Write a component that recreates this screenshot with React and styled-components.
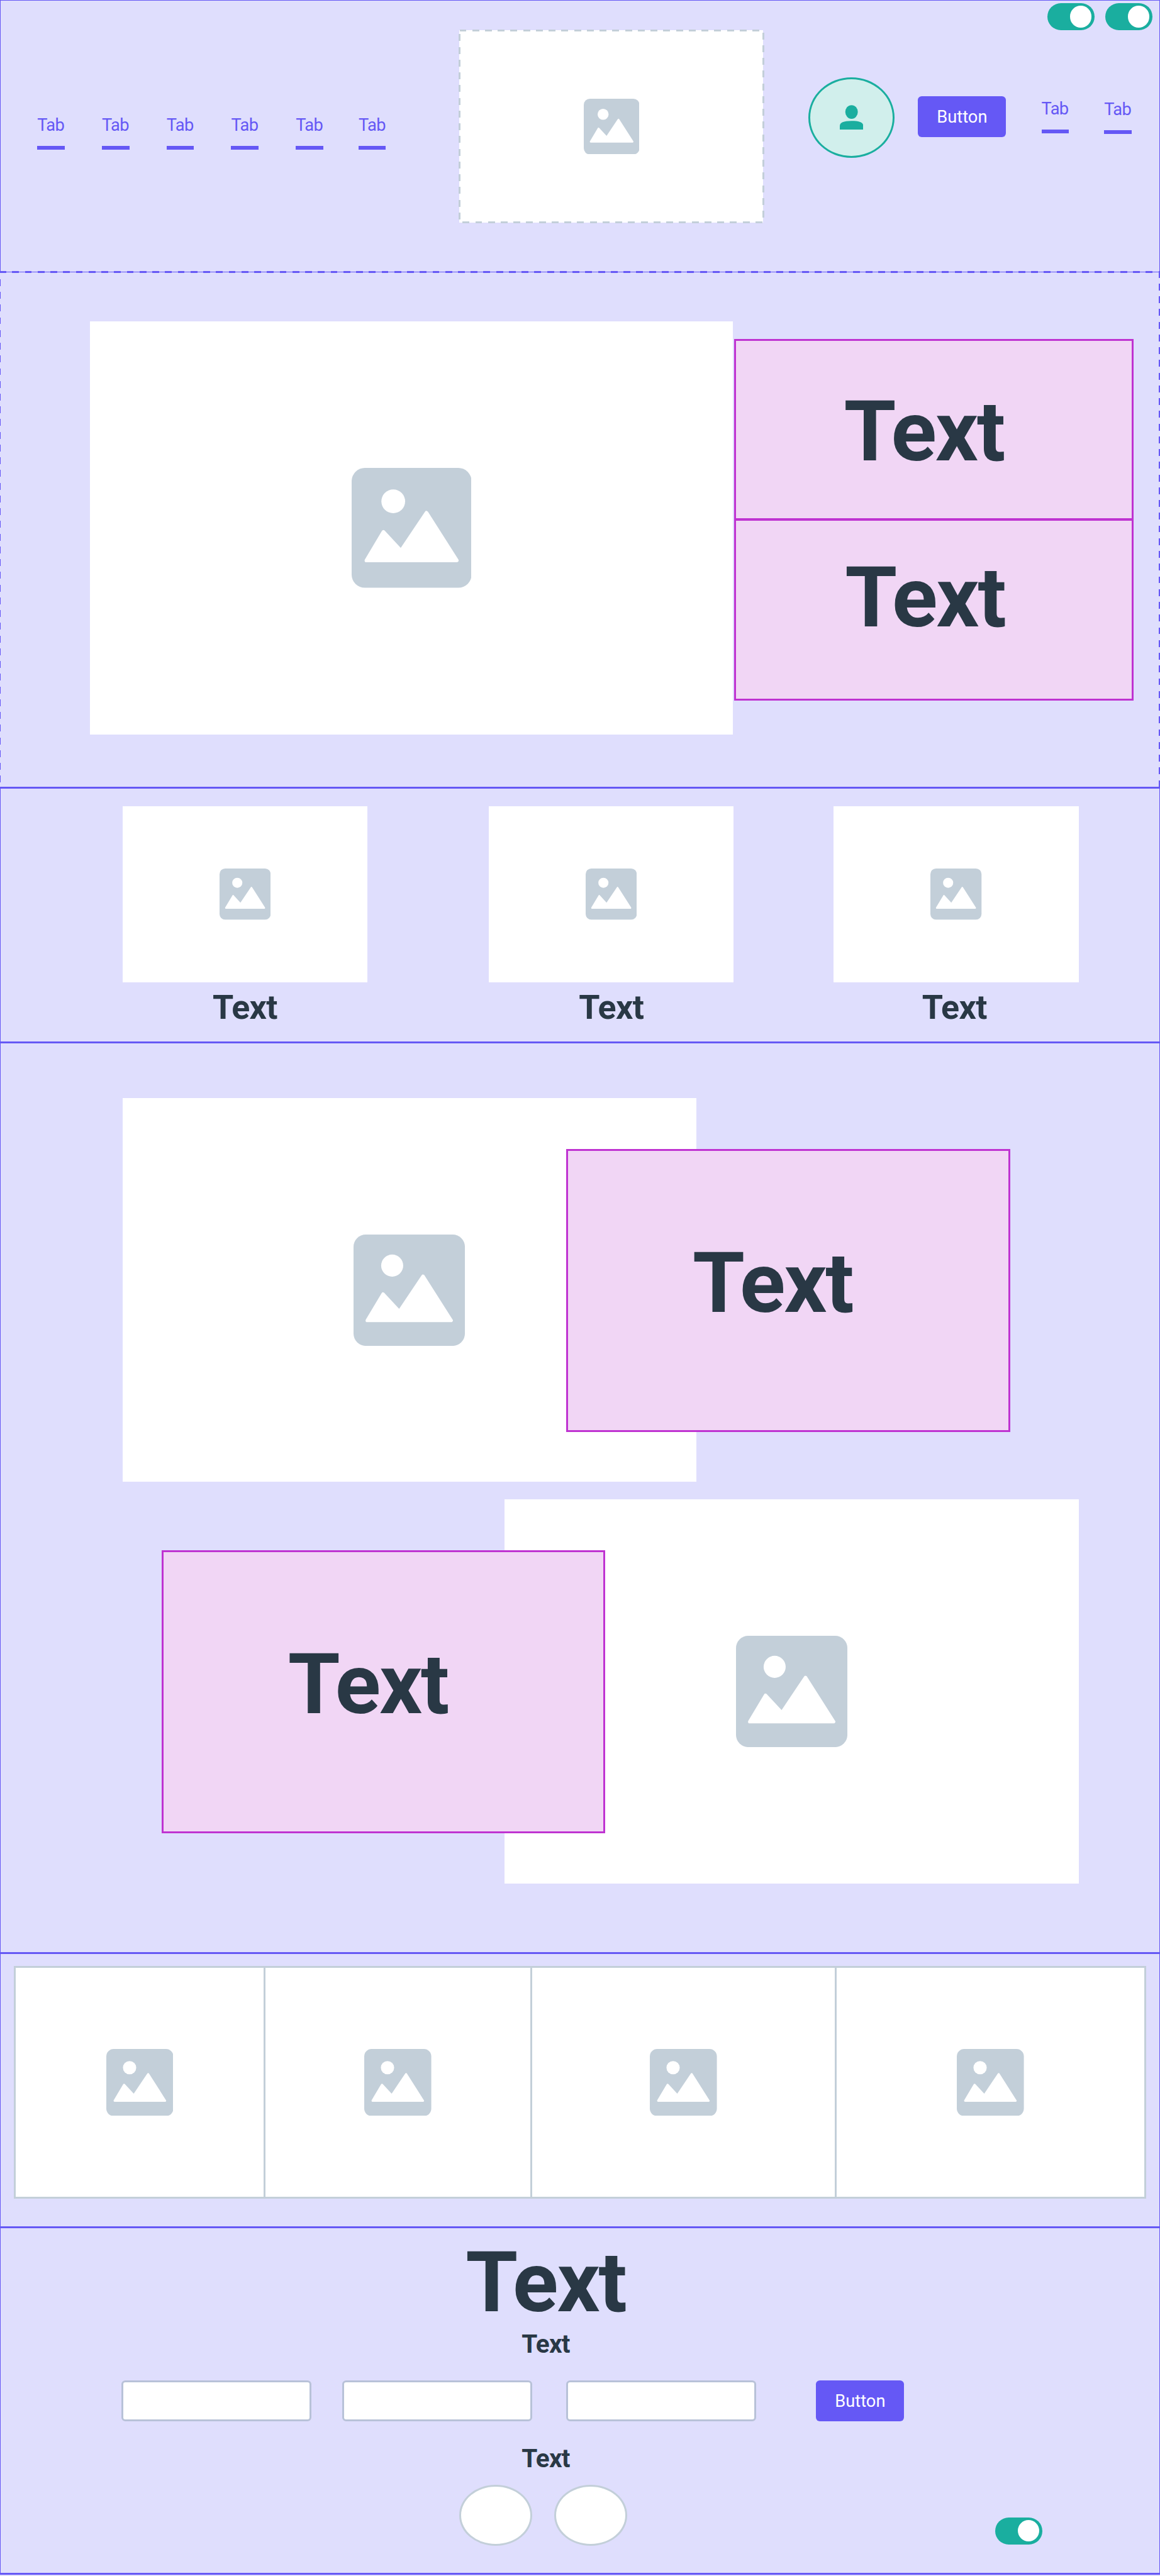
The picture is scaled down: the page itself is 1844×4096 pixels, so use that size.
import React from 'react';
import styled, { createGlobalStyle, css } from 'styled-components';

/* All measures are written in design units and scaled to the page width. */
const SCALE = 1844 / 2368;
const u = (n) => `${+(n * SCALE).toFixed(3)}px`;

const color = {
  violet: '#6558f5',
  lilac: '#dfdefd',
  orchid: '#bf33d1',
  pink: '#f1d6f5',
  teal: '#1aae9f',
  mint: '#d1efec',
  grey: '#c3cfd9',
  inputLine: '#b8c2d8',
  ink: '#293845',
};

const GlobalStyle = createGlobalStyle`
  * { box-sizing: border-box; }
  body {
    margin: 0;
    background: ${color.lilac};
    font-family: Roboto, 'Liberation Sans', sans-serif;
  }
`;

/* Dashes run clockwise from the top-left corner and carry on round each corner. */
const DASH = 14;
const PERIOD = 26;
const dashSide = (angle, line, travelled) => {
  const s = 2 - (travelled % PERIOD);
  return `repeating-linear-gradient(${angle}deg, ${line} ${u(s)}, ${line} ${u(s + DASH)}, transparent ${u(s + DASH)}, transparent ${u(s + PERIOD)})`;
};
const dashedOutline = (w, h, line) => css`
  &::after {
    content: '';
    position: absolute;
    inset: ${u(-2)};
    pointer-events: none;
    background:
      ${dashSide(90, line, 0)} top / 100% ${u(4)} no-repeat,
      ${dashSide(180, line, w)} right / ${u(4)} 100% no-repeat,
      ${dashSide(270, line, w + h)} bottom / 100% ${u(4)} no-repeat,
      ${dashSide(0, line, 2 * w + h)} left / ${u(4)} 100% no-repeat;
  }
`;
const solidOutline = (line) => css`
  &::after {
    content: '';
    position: absolute;
    inset: ${u(-2)};
    pointer-events: none;
    border: ${u(4)} solid ${line};
  }
`;

const Page = styled.main`
  width: 1844px;
  height: 4096px;
  overflow: hidden;
  background: ${color.lilac};
`;

const Section = styled.section`
  position: relative;
  height: ${(p) => u(p.$h)};
  background: ${color.lilac};
  ${(p) => (p.$dashed ? dashedOutline(2368, p.$h, color.violet) : solidOutline(color.violet))}
`;

/* ---------- shared parts ---------- */

const Frame = styled.div`
  position: relative;
  flex: none;
  display: flex;
  align-items: center;
  justify-content: center;
  width: ${(p) => u(p.$w)};
  height: ${(p) => u(p.$h)};
  background: #fff;
  ${(p) => p.$outline === 'dashed' && dashedOutline(p.$w, p.$h, color.grey)}
  ${(p) => p.$outline === 'solid' && solidOutline(color.grey)}

  svg {
    display: block;
    width: auto;
    height: 29%;
  }
`;

function Picture({ w, h, outline, className }) {
  return (
    <Frame $w={w} $h={h} $outline={outline} className={className}>
      <svg viewBox="0 0 100 100" aria-hidden="true">
        <rect width="100" height="100" rx="11" fill={color.grey} />
        <circle cx="34.7" cy="27.9" r="9.9" fill="#fff" />
        <path
          d="M12.3 77.2 L26.5 53.4 L41.1 69.15 L62.4 37.4 L87.7 77.2 Z"
          fill="#fff"
          stroke="#fff"
          strokeWidth="3"
          strokeLinejoin="round"
        />
      </svg>
    </Frame>
  );
}

const textSizes = {
  large: { size: 172, spacing: -2.6 },
  medium: { size: 69, spacing: -0.8 },
  small: { size: 52, spacing: -1 },
};

const Heading = styled.div`
  color: ${color.ink};
  font-weight: 700;
  font-size: ${(p) => u(textSizes[p.$size].size)};
  letter-spacing: ${(p) => u(textSizes[p.$size].spacing)};
  line-height: 1;
  white-space: nowrap;
`;

const Button = styled.button`
  flex: none;
  width: ${u(180)};
  height: ${u(84)};
  padding: ${u(4)} 0 0;
  border: 0;
  border-radius: ${u(8)};
  background: ${color.violet};
  color: #fff;
  font: 400 ${u(35)} / 1 Roboto, 'Liberation Sans', sans-serif;
  letter-spacing: ${u(0)};
`;

const Toggle = styled.span`
  flex: none;
  display: flex;
  justify-content: flex-end;
  align-items: center;
  width: ${u(96)};
  height: ${u(56)};
  padding-right: ${u(6)};
  border-radius: ${u(28)};
  background: ${color.teal};

  &::before {
    content: '';
    width: ${u(44)};
    height: ${u(44)};
    border-radius: 50%;
    background: #fff;
  }
`;

const Card = styled.div`
  flex: none;
  width: ${(p) => u(p.$w)};
  height: ${(p) => u(p.$h)};
  border: ${u(4)} solid ${color.orchid};
  background: ${color.pink};
`;

/* ---------- header ---------- */

const Toggles = styled.div`
  display: flex;
  justify-content: flex-end;
  gap: ${u(22)};
  height: ${u(62)};
  padding: ${u(6)} ${u(16)} 0 0;
`;

const HeaderRow = styled.div`
  display: flex;
  align-items: flex-start;
`;

const TabList = styled.nav`
  flex: none;
  display: flex;
  width: ${u(938)};
  padding: ${u(176)} 0 0 ${u(76)};
  gap: ${u(76)};
`;

const Tab = styled.a`
  flex: none;
  width: ${u(56)};
  margin-left: ${(p) => u(p.$shift || 0)};
  border-bottom: ${u(8)} solid ${color.violet};
  padding-top: ${u(1)};
  padding-bottom: ${u(24)};
  color: ${color.violet};
  font-size: ${u(35)};
  letter-spacing: ${u(-0.8)};
  line-height: 1;
  white-space: nowrap;
`;

const Avatar = styled.div`
  flex: none;
  display: flex;
  justify-content: center;
  width: ${u(176)};
  height: ${u(164)};
  margin: ${u(96)} 0 0 ${u(92)};
  padding-top: ${u(52)};
  border: ${u(4)} solid ${color.teal};
  border-radius: 50%;
  background: ${color.mint};

  svg {
    width: ${u(48)};
    height: ${u(51)};
  }
`;

const HeaderButton = styled(Button)`
  margin: ${u(134)} 0 0 ${u(48)};
`;

const SideTabs = styled.nav`
  display: flex;
  align-items: flex-start;
  padding: ${u(142)} 0 0 ${u(72)};
  gap: ${u(72)};

  a:last-child {
    margin-top: ${u(2)};
  }
`;

/* ---------- hero ---------- */

const HeroRow = styled.div`
  display: flex;
  align-items: flex-start;
  gap: ${u(2)};
  padding: ${u(100)} 0 0 ${u(184)};
`;

const HeroCards = styled.div`
  padding-top: ${u(36)};
`;

const HeroCard = styled(Card)`
  margin-bottom: ${u(-2)};
  padding: ${(p) => `${u(p.$top)} 0 0 ${u(p.$left)}`};
`;

/* ---------- gallery ---------- */

const Gallery = styled.div`
  display: flex;
  padding: ${u(38)} 0 0 ${u(250)};
`;

const GalleryItem = styled.figure`
  margin: 0 ${(p) => u(p.$after)} 0 0;
`;

const Caption = styled(Heading)`
  width: 100%;
  margin-top: ${u(16)};
  padding-right: ${(p) => u(p.$nudge)};
  text-align: center;
`;

/* ---------- features ---------- */

const Features = styled.div`
  display: flex;
  flex-direction: column;
  gap: ${u(36)};
  padding-top: ${u(114)};
`;

const Feature = styled.div`
  display: flex;
  align-items: flex-start;
  padding-left: ${(p) => u(p.$left)};
`;

const FeatureCard = styled(Card)`
  position: relative;
  z-index: 1;
  margin-top: ${u(104)};
  margin-left: ${(p) => u(p.$before || 0)};
  margin-right: ${(p) => u(p.$after || 0)};
  padding: ${u(185)} 0 0 ${u(254)};
`;

/* ---------- strip ---------- */

const Strip = styled.div`
  display: flex;
  padding: ${u(28)} 0 0 ${u(30)};
`;

/* ---------- contact ---------- */

const Contact = styled.div`
  display: flex;
  flex-direction: column;
  padding-top: ${u(28)};
`;

const ContactText = styled(Heading)`
  width: ${u(2228)};
  margin-top: ${(p) => u(p.$top)};
  text-align: center;
`;

const Form = styled.form`
  display: flex;
  height: ${u(84)};
  margin-top: ${u(47)};
  padding-left: ${u(248)};
`;

const Input = styled.input`
  width: ${u(388)};
  height: ${u(84)};
  margin: 0 ${(p) => u(p.$after)} 0 0;
  padding: 0;
  border: ${u(4)} solid ${color.inputLine};
  border-radius: ${u(8)};
  background: #fff;
`;

const LinkRow = styled.div`
  display: flex;
  align-items: flex-start;
  gap: ${u(46)};
  margin-top: ${u(28)};
  padding-left: ${u(938)};
`;

const Round = styled.span`
  flex: none;
  width: ${u(148)};
  height: ${u(124)};
  border: ${u(4)} solid ${color.grey};
  border-radius: 50%;
  background: #fff;
`;

const CornerToggle = styled(Toggle)`
  margin: ${u(66)} 0 0 ${u(706)};
`;

export default function App() {
  return (
    <Page>
      <GlobalStyle />

      <Section as="header" $h={556}>
        <Toggles>
          <Toggle />
          <Toggle />
        </Toggles>
        <HeaderRow>
          <TabList>
            {[0, 0, 0, 0, 0, -4].map((shift, i) => (
              <Tab key={i} $shift={shift}>Tab</Tab>
            ))}
          </TabList>
          <Picture w={620} h={392} outline="dashed" />
          <Avatar>
            <svg viewBox="0 0 48 51" aria-hidden="true" fill={color.teal}>
              <ellipse cx="24" cy="14.2" rx="12.8" ry="14" />
              <path d="M0 51 V43 C0 36 7 32.5 24 32.5 C41 32.5 48 36 48 43 V51 Z" />
            </svg>
          </Avatar>
          <HeaderButton>Button</HeaderButton>
          <SideTabs>
            <Tab>Tab</Tab>
            <Tab>Tab</Tab>
          </SideTabs>
        </HeaderRow>
      </Section>

      <Section $h={1052} $dashed>
        <HeroRow>
          <Picture w={1312} h={844} />
          <HeroCards>
            <HeroCard $w={816} $h={370} $top={101} $left={221}>
              <Heading $size="large">Text</Heading>
            </HeroCard>
            <HeroCard $w={816} $h={370} $top={71} $left={223}>
              <Heading $size="large">Text</Heading>
            </HeroCard>
          </HeroCards>
        </HeroRow>
      </Section>

      <Section $h={520}>
        <Gallery>
          {[{ after: 248, nudge: 0 }, { after: 204, nudge: 0 }, { after: 0, nudge: 7 }].map((item, i) => (
            <GalleryItem key={i} $after={item.after}>
              <Picture w={500} h={360} />
              <Caption as="figcaption" $size="medium" $nudge={item.nudge}>Text</Caption>
            </GalleryItem>
          ))}
        </Gallery>
      </Section>

      <Section $h={1860}>
        <Features>
          <Feature $left={250}>
            <Picture w={1172} h={784} />
            <FeatureCard $w={906} $h={578} $before={-266}>
              <Heading $size="large">Text</Heading>
            </FeatureCard>
          </Feature>
          <Feature $left={330}>
            <FeatureCard $w={906} $h={578} $after={-206}>
              <Heading $size="large">Text</Heading>
            </FeatureCard>
            <Picture w={1172} h={784} />
          </Feature>
        </Features>
      </Section>

      <Section $h={560}>
        <Strip>
          {[510, 544, 622, 632].map((w) => (
            <Picture key={w} w={w} h={472} outline="solid" />
          ))}
        </Strip>
      </Section>

      <Section as="footer" $h={708}>
        <Contact>
          <ContactText $size="large" $top={0}>Text</ContactText>
          <ContactText $size="small" $top={13}>Text</ContactText>
          <Form>
            <Input $after={62} aria-label="First field" />
            <Input $after={70} aria-label="Second field" />
            <Input $after={122} aria-label="Third field" />
            <Button type="button">Button</Button>
          </Form>
          <ContactText $size="small" $top={50}>Text</ContactText>
          <LinkRow>
            <Round />
            <Round />
            <CornerToggle />
          </LinkRow>
        </Contact>
      </Section>
    </Page>
  );
}
